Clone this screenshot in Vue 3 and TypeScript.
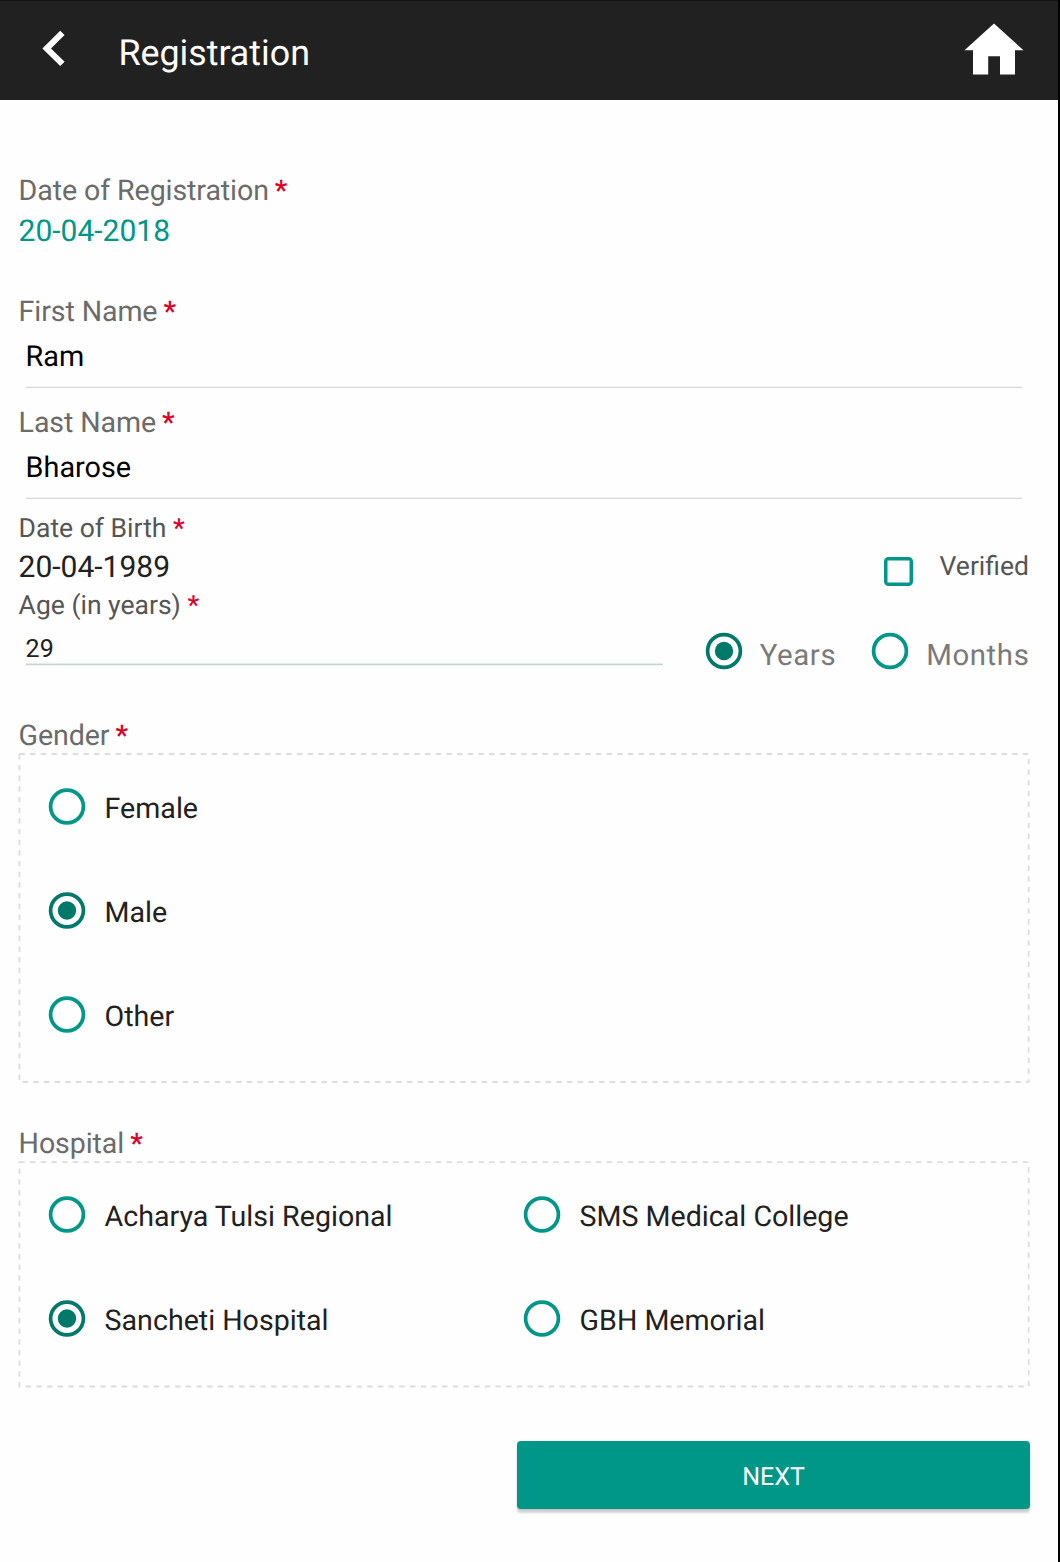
<script setup lang="ts">
import { ref } from 'vue'

const firstName = ref('Ram')
const lastName = ref('Bharose')
const age = ref('29')
const verified = ref(false)
const unit = ref('Years')
const gender = ref('Male')
const hospital = ref('Sancheti Hospital')

const units = ['Years', 'Months']
const genders = ['Female', 'Male', 'Other']
const hospitals = [
  'Acharya Tulsi Regional',
  'SMS Medical College',
  'Sancheti Hospital',
  'GBH Memorial',
]
</script>

<template>
  <div class="screen">
    <header class="bar">
      <svg class="back" width="24" height="37" viewBox="0 0 24 37">
        <path d="M18.2 .8 22.6 5 9 18.4 22.6 31.8 18.2 36 .4 18.4Z" fill="#fff" />
      </svg>
      <h1>Registration</h1>
      <svg class="home" width="60" height="52" viewBox="0 0 60 52">
        <path d="M30 .4 59.5 27.3H51V51.5H36V33.3H24.2V51.5H9V27.3H.5Z" fill="#fff" />
      </svg>
    </header>

    <main class="form">
      <div class="label">Date of Registration <b>*</b></div>
      <div class="date teal">20-04-2018</div>

      <div class="label first">First Name <b>*</b></div>
      <div class="input">{{ firstName }}</div>

      <div class="label last">Last Name <b>*</b></div>
      <div class="input">{{ lastName }}</div>

      <div class="row">
        <div class="birth">
          <div class="small">Date of Birth <b>*</b></div>
          <div class="date">20-04-1989</div>
          <div class="small">Age (in years) <b>*</b></div>
        </div>
        <div class="verified" @click="verified = !verified">
          <span class="box" :class="{ on: verified }"></span>
          <span class="small">Verified</span>
        </div>
      </div>

      <div class="row age-row">
        <div class="age">{{ age }}</div>
        <div class="units">
          <div v-for="u in units" :key="u" class="unit" @click="unit = u">
            <svg class="radio" :class="{ on: unit === u }" width="38" height="38" viewBox="0 0 38 38">
              <circle cx="19" cy="19" r="16.4" />
              <circle v-if="unit === u" class="dot" cx="19" cy="19" r="9.2" />
            </svg>
            <span>{{ u }}</span>
          </div>
        </div>
      </div>

      <div class="label gender">Gender <b>*</b></div>
      <div class="group one">
        <svg class="dashes" width="1011" height="330"><rect x="0.4" y="1" width="1009.3" height="328" /></svg>
        <div v-for="g in genders" :key="g" class="option" @click="gender = g">
          <svg class="radio" :class="{ on: gender === g }" width="38" height="38" viewBox="0 0 38 38">
            <circle cx="19" cy="19" r="16.4" />
            <circle v-if="gender === g" class="dot" cx="19" cy="19" r="9.2" />
          </svg>
          <span>{{ g }}</span>
        </div>
      </div>

      <div class="label hospital">Hospital <b>*</b></div>
      <div class="group two">
        <svg class="dashes" width="1011" height="227"><rect x="0.4" y="1.2" width="1009.3" height="224.3" /></svg>
        <div v-for="h in hospitals" :key="h" class="option" @click="hospital = h">
          <svg class="radio" :class="{ on: hospital === h }" width="38" height="38" viewBox="0 0 38 38">
            <circle cx="19" cy="19" r="16.4" />
            <circle v-if="hospital === h" class="dot" cx="19" cy="19" r="9.2" />
          </svg>
          <span>{{ h }}</span>
        </div>
      </div>

      <div class="actions"><button class="next">NEXT</button></div>
    </main>
  </div>
</template>

<style>
body {
  background: #fefefe;
}
</style>

<style scoped>
.screen {
  box-sizing: border-box;
  width: 1060px;
  height: 1562px;
  overflow: hidden;
  border-right: 2px solid #000;
  background: #fefefe;
  color: #212121;
  font-family: Roboto, 'Liberation Sans', sans-serif;
  text-rendering: geometricPrecision;
}
.bar {
  box-sizing: border-box;
  display: flex;
  align-items: flex-start;
  height: 100px;
  padding: 0 34px 0 42px;
  border-top: 1px solid #111;
  background: #212121;
  color: #fff;
}
.back {
  margin-top: 29px;
}
.bar h1 {
  flex: 1;
  margin: 31px 0 0 52.4px;
  font-size: 35.8px;
  font-weight: 400;
  line-height: 42px;
}
.home {
  margin-top: 22px;
}
.form {
  padding: 73px 28px 0 18.6px;
}
b {
  margin-left: -1px;
  color: #d9042b;
  font-weight: 500;
}
.label {
  color: #6b6b6b;
  font-size: 28.6px;
  letter-spacing: -0.1px;
  line-height: 34px;
}
.date {
  font-size: 30px;
  line-height: 36px;
}
.teal {
  margin-top: 7px;
  color: #009688;
}
.first {
  margin-top: 44px;
}
.last {
  margin-top: 17px;
}
.input {
  box-sizing: border-box;
  height: 49px;
  margin: 11px 8px 0 7px;
  border-bottom: 1px solid #dadada;
  box-shadow: inset 0 -1px #f2f2f2;
  color: #000;
  font-size: 28.8px;
  line-height: 37px;
}
.row {
  display: flex;
  justify-content: space-between;
  align-items: flex-start;
}
.small {
  color: #555;
  font-size: 26.5px;
  line-height: 30px;
}
.small b {
  margin-left: 0;
}
.birth {
  padding-top: 15px;
}
.birth .date {
  margin: 6px 0 5px;
}
.verified {
  display: flex;
  padding-top: 53px;
  padding-right: 1px;
}
.box {
  box-sizing: border-box;
  width: 29px;
  height: 29px;
  margin: 5px 27px 0 0;
  border: 3px solid #009688;
  border-radius: 4.5px;
  box-shadow: inset 0 0 0 0.5px #009688;
}
.box.on {
  background: #009688;
}
.age-row {
  height: 97px;
}
.age {
  box-sizing: border-box;
  width: 637px;
  height: 31px;
  margin: 13px 0 0 7px;
  border-bottom: 1px solid #c6d5d2;
  box-shadow: inset 0 -1px #e4edeb, 0 1px #f0f5f4;
  font-size: 25px;
  line-height: 32px;
}
.units {
  display: flex;
  gap: 35px;
  padding-top: 11px;
  padding-right: 0.6px;
}
.unit {
  display: flex;
  gap: 17px;
  color: #7a7a7a;
  font-size: 29.4px;
  letter-spacing: 0.6px;
  line-height: 48px;
}
.radio {
  display: block;
  flex: none;
  fill: none;
  stroke: #009688;
  stroke-width: 3.7;
}
.radio.on {
  stroke: #00796b;
}
.radio .dot {
  fill: #00796b;
  stroke: none;
}
.group {
  position: relative;
  box-sizing: border-box;
  width: 1011px;
  margin-top: 1px;
  padding: 34px 0 0 29px;
}
.group.one {
  height: 330px;
}
.group.two {
  display: grid;
  grid-template-columns: 475px 475px;
  align-content: start;
  height: 226px;
}
.dashes {
  position: absolute;
  left: 0;
  top: 0;
  fill: none;
  overflow: visible;
  stroke: #dcdcdc;
  stroke-width: 1.8;
  stroke-dasharray: 5.338 5.338;
}
.option {
  display: flex;
  gap: 19px;
  height: 104px;
  font-size: 28.6px;
  line-height: 40px;
  transform: translateY(0.5px);
}
.hospital {
  margin-top: 43px;
}
.actions {
  display: flex;
  justify-content: flex-end;
  margin-top: 54px;
}
.next {
  width: 513px;
  height: 68px;
  padding: 6px 0 0;
  border: 0;
  border-radius: 4px;
  background: #009688;
  box-shadow: 0 4px 2px rgba(0, 0, 0, 0.16), 0 1px 2px rgba(0, 0, 0, 0.1);
  color: #fff;
  font: 25px/62px Roboto, sans-serif;
  text-rendering: geometricPrecision;
}
</style>
